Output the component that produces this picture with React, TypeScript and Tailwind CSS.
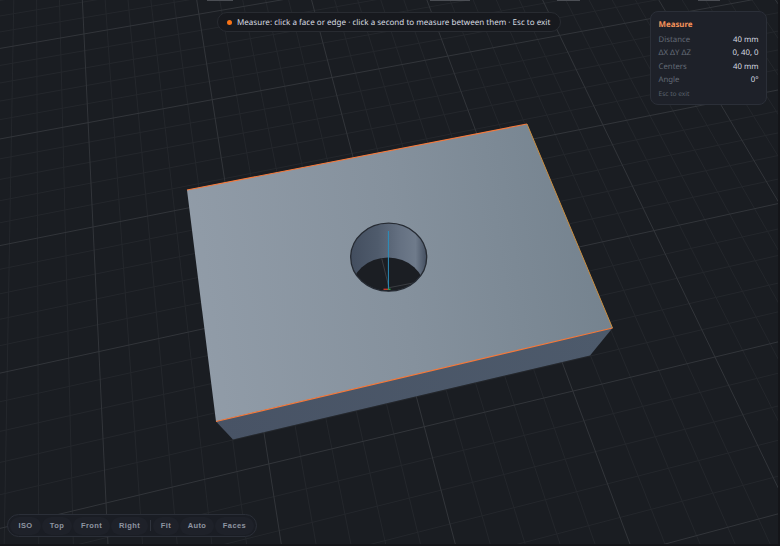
import { useMemo } from "react";

// floor grid: homography fitted to the major line crossings of the viewport
function project(i: number, j: number): [number, number] {
  const u = i / 4;
  const v = (j - 2) / 2;
  const w = 0.07829 * u - 0.17696 * v + 1;
  return [
    (557.21 * u - 5.76 * v + 93) / w,
    (-92.21 * u + 186.99 * v + 227) / w,
  ];
}

function gridPaths() {
  const minor: string[] = [];
  const major: string[] = [];
  for (let n = -15; n <= 45; n++) {
    const k = n / 5;
    const a = project(k, -3);
    const b = project(k, 9);
    const c = project(-3, k);
    const d = project(9, k);
    const target = n % 5 === 0 ? major : minor;
    target.push(`M${a[0].toFixed(1)} ${a[1].toFixed(1)}L${b[0].toFixed(1)} ${b[1].toFixed(1)}`);
    target.push(`M${c[0].toFixed(1)} ${c[1].toFixed(1)}L${d[0].toFixed(1)} ${d[1].toFixed(1)}`);
  }
  return { minor: minor.join(""), major: major.join("") };
}

function Viewport() {
  const grid = useMemo(gridPaths, []);
  return (
    <svg viewBox="0 0 778 544" className="block h-full w-full">
      <defs>
        <linearGradient id="top-face" gradientUnits="userSpaceOnUse" x1="190" y1="300" x2="612" y2="240">
          <stop offset="0" stopColor="#919ca8" />
          <stop offset="0.5" stopColor="#85919d" />
          <stop offset="1" stopColor="#74828e" />
        </linearGradient>
        <linearGradient id="side-face" gradientUnits="userSpaceOnUse" x1="216" y1="430" x2="612" y2="340">
          <stop offset="0" stopColor="#485365" />
          <stop offset="1" stopColor="#4d5a6b" />
        </linearGradient>
        <linearGradient id="hole-wall" gradientUnits="userSpaceOnUse" x1="351" y1="0" x2="427" y2="0">
          <stop offset="0" stopColor="#434e5f" />
          <stop offset="0.35" stopColor="#4f5b6c" />
          <stop offset="0.65" stopColor="#657182" />
          <stop offset="0.85" stopColor="#6f7b8b" />
          <stop offset="1" stopColor="#414c5d" />
        </linearGradient>
        <clipPath id="hole-clip">
          <ellipse cx="388.7" cy="257.2" rx="38" ry="34" />
        </clipPath>
      </defs>

      <path d={grid.minor} stroke="#24272c" strokeWidth="1" fill="none" />
      <path d={grid.major} stroke="#32353a" strokeWidth="1" fill="none" />

      {/* slivers of labels cut off by the top edge */}
      <rect x="207" y="0" width="26" height="1" fill="#4b4e54" />
      <rect x="430" y="0" width="40" height="1" fill="#4b4e54" />
      <rect x="557" y="0" width="23" height="1" fill="#4b4e54" />
      <rect x="698" y="0" width="22" height="1" fill="#4b4e54" />

      {/* block */}
      <polygon points="216,421.5 612.5,328 590,355.5 233,439.5" fill="url(#side-face)" />
      <polygon points="187,190 527,124 612.5,328 216,421.5" fill="url(#top-face)" />

      {/* through hole */}
      <g clipPath="url(#hole-clip)">
        <rect x="350" y="222" width="78" height="70" fill="url(#hole-wall)" />
        <ellipse cx="388" cy="290.5" rx="37" ry="33" fill="#1b1e23" />
        <path d="M381.7 258.3L389 287.7L413 283" stroke="#3a3d42" strokeWidth="1" fill="none" />
      </g>
      <ellipse cx="388.7" cy="257.2" rx="38" ry="34" fill="none" stroke="#262b33" strokeWidth="1.3" />
      <line x1="388.4" y1="231" x2="388.4" y2="289" stroke="#2a8fbd" strokeWidth="1" />
      <line x1="383.5" y1="289.3" x2="388" y2="289.3" stroke="#c0392b" strokeWidth="1.4" />
      <line x1="388" y1="289.3" x2="390.5" y2="289.3" stroke="#2f9e44" strokeWidth="1.4" />

      {/* picked edges */}
      <line x1="187" y1="190" x2="527" y2="124" stroke="#f4793b" strokeWidth="1.2" />
      <line x1="216" y1="421.5" x2="612.5" y2="328" stroke="#f4793b" strokeWidth="1.2" />
      <line x1="527" y1="124" x2="612.5" y2="328" stroke="#c98d3f" strokeWidth="1" />
    </svg>
  );
}

function MeasureRow({ label, value }: { label: string; value: string }) {
  return (
    <div className="flex h-[13.2px] items-center justify-between">
      <span className="text-[#636a76]">{label}</span>
      <span className="text-[#d8dce2]">{value}</span>
    </div>
  );
}

function MeasurePanel() {
  return (
    <div className="absolute right-[11px] top-[11px] h-[94px] w-[117px] rounded-lg border border-[#2b2f38] bg-[#1e2129] px-[7.5px] pt-[7.5px] text-[7.8px] leading-none">
      <div className="flex h-[13px] items-center text-[7.9px] font-bold text-[#f4925a]">Measure</div>
      <div className="mt-[2px]">
        <MeasureRow label="Distance" value="40 mm" />
        <MeasureRow label="ΔX ΔY ΔZ" value="0, 40, 0" />
        <MeasureRow label="Centers" value="40 mm" />
        <MeasureRow label="Angle" value="0°" />
      </div>
      <div className="mt-[3.5px] text-[6.6px] text-[#5a616c]">Esc to exit</div>
    </div>
  );
}

function HintPill() {
  return (
    <div className="absolute left-[217px] top-[12px] flex h-[20px] w-[344px] items-center gap-[5px] rounded-full border border-[#282b31] bg-[#17191e] pl-[9px] text-[8.05px] text-[#d8dce2]">
      <span className="h-[5px] w-[5px] shrink-0 rounded-full bg-[#f97316]" />
      <span className="whitespace-nowrap pt-[1.5px]">
        Measure: click a face or edge · click a second to measure between them · Esc to exit
      </span>
    </div>
  );
}

function ViewButton({ label, width }: { label: string; width: string }) {
  return (
    <button
      className={`flex h-[18px] items-center justify-center rounded-full bg-[#1e2129] font-['Liberation_Sans',sans-serif] text-[7.5px] font-bold tracking-[0.4px] text-[#8f95a1] ${width}`}
    >
      {label}
    </button>
  );
}

function ViewBar() {
  return (
    <div className="absolute bottom-[7px] left-[7px] flex h-[23px] items-center gap-px rounded-full border border-[#2b2f38] bg-[#1a1d24] px-[2px]">
      <ViewButton label="ISO" width="w-[31px]" />
      <ViewButton label="Top" width="w-[30px]" />
      <ViewButton label="Front" width="w-[37px]" />
      <ViewButton label="Right" width="w-[37px]" />
      <div className="mx-px h-[11px] w-px bg-[#2f333c]" />
      <ViewButton label="Fit" width="w-[26px]" />
      <ViewButton label="Auto" width="w-[34px]" />
      <ViewButton label="Faces" width="w-[39px]" />
    </div>
  );
}

export default function App() {
  return (
    <div className="h-[546px] w-[780px] overflow-hidden bg-[#141519] pb-[2px] pr-[2px] font-['Noto_Sans',sans-serif] [text-rendering:geometricPrecision]">
      <div className="relative h-full w-full overflow-hidden bg-[#1a1d22]">
        <Viewport />
        <HintPill />
        <MeasurePanel />
        <ViewBar />
      </div>
    </div>
  );
}
